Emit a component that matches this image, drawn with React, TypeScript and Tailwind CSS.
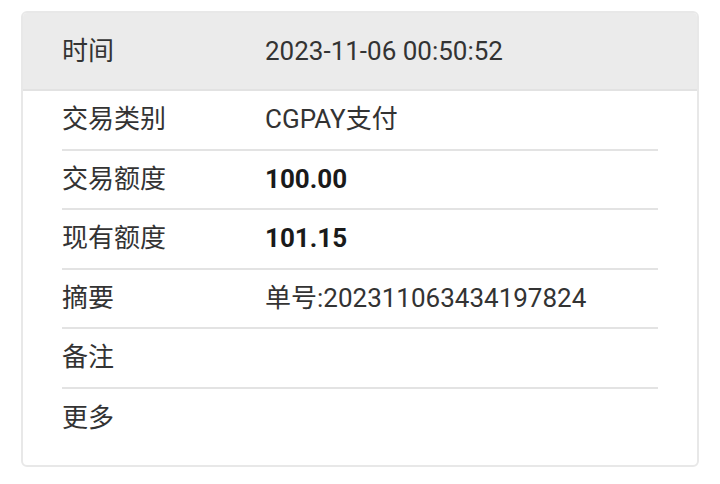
import React from 'react'

type Row = {
  label: string
  value?: string
  bold?: boolean
}

const rows: Row[] = [
  { label: '交易类别', value: 'CGPAY支付' },
  { label: '交易额度', value: '100.00', bold: true },
  { label: '现有额度', value: '101.15', bold: true },
  { label: '摘要', value: '单号:202311063434197824' },
  { label: '备注' },
  { label: '更多' }
]

export default function App() {
  return (
    <div
      className="min-h-screen bg-white pt-[11px] px-[21px] text-[26px] text-[#333333]"
      style={{ fontFamily: 'Roboto, "Noto Sans CJK SC", sans-serif' }}
    >
      <div className="border-2 border-[#e8e8e8] rounded-[6px] overflow-hidden bg-white">
        <div className="flex items-center h-[78px] bg-[#ebebeb] border-b-2 border-[#e2e2e2] px-[39px]">
          <div className="w-[203px] shrink-0">时间</div>
          <div>2023-11-06 00:50:52</div>
        </div>
        <div className="px-[39px] pb-[17px]">
          {rows.map((row, i) => (
            <div
              key={row.label}
              className={
                'flex items-center h-[59.5px] ' +
                (i < rows.length - 1 ? 'border-b-2 border-[#e3e3e3]' : '')
              }
            >
              <div className="w-[203px] shrink-0">{row.label}</div>
              {row.value && (
                <div className={row.bold ? 'font-bold text-[#1a1a1a]' : ''}>{row.value}</div>
              )}
            </div>
          ))}
        </div>
      </div>
    </div>
  )
}
